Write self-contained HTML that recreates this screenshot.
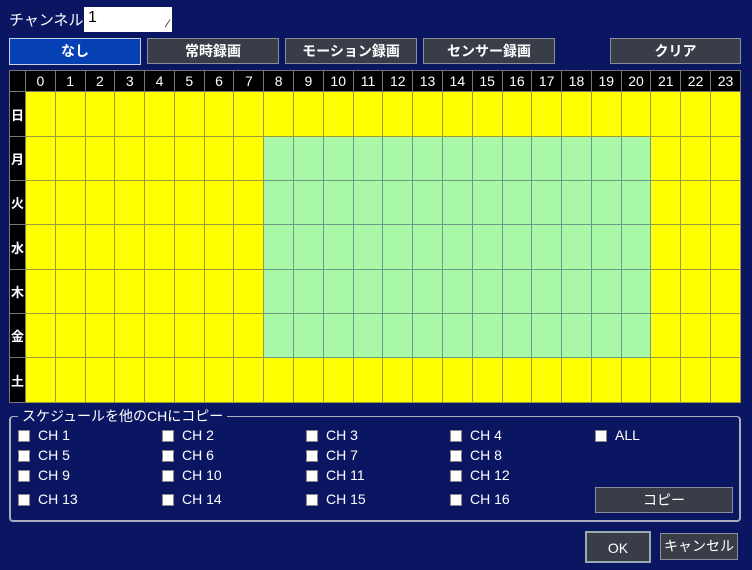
<!DOCTYPE html><html><head><meta charset="utf-8"><style>
body{margin:0;width:752px;height:570px;background:#0b1663;font-family:"Liberation Sans","Noto Sans CJK JP",sans-serif;color:#fff;position:relative;overflow:hidden}
.a{position:absolute}
.btn{position:absolute;background:#383d48;border:1px solid #8a8f99;box-sizing:border-box;color:#fff;font-size:14px;text-align:center;font-weight:bold}
table{border-collapse:collapse;position:absolute;left:9px;top:70px;width:732px;table-layout:fixed}
td{padding:0;border:1px solid #555;box-sizing:border-box}
th{background:#000;color:#fff;font-weight:normal;font-size:14px;border:1px solid #777;padding:0;height:20px;overflow:hidden}
.y{background:#ffff00;border-color:#9c9a3a}
.g{background:#a8f8a8;border-color:#6a9c86}
.rl{background:#000;font-size:13px;font-weight:bold;text-align:center;border-color:#777}
.cb{position:absolute;width:10px;height:10px;background:#fff;border:1px solid #888}
.cl{position:absolute;font-size:14px}
</style></head><body>
<div class="a" style="left:9px;top:9px;font-size:15px">チャンネル</div>
<div class="a" style="left:84px;top:7px;width:88px;height:25px;background:#fff;color:#000;font-size:16px;box-sizing:border-box;padding:2px 4px">1<span style="position:absolute;right:3px;bottom:2px;font-size:11px">⁄</span></div>
<div class="btn" style="left:9px;top:38px;width:132px;height:27px;line-height:25px;background:#0541b5;border-color:#c8d0e8">なし</div>
<div class="btn" style="left:147px;top:38px;width:132px;height:26px;line-height:24px">常時録画</div>
<div class="btn" style="left:285px;top:38px;width:132px;height:26px;line-height:24px">モーション録画</div>
<div class="btn" style="left:423px;top:38px;width:132px;height:26px;line-height:24px">センサー録画</div>
<div class="btn" style="left:610px;top:38px;width:131px;height:26px;line-height:24px">クリア</div>
<table id="t"></table>
<div class="a" style="left:9px;top:416px;width:732px;height:106px;border:2px solid #a9acbf;border-top-width:1px;border-radius:4px;box-sizing:border-box"></div>
<div class="a" style="left:18px;top:407px;background:#0b1663;padding:0 4px;font-size:14px;line-height:18px">スケジュールを他のCHにコピー</div>
<div id="cbs"></div>
<div class="btn" style="left:595px;top:487px;width:138px;height:26px;line-height:24px;font-weight:normal">コピー</div>
<div class="btn" style="left:585px;top:531px;width:66px;height:32px;line-height:30px;font-weight:normal;border:2px solid #9aa">OK</div>
<div class="btn" style="left:660px;top:533px;width:78px;height:27px;line-height:25px;font-weight:normal">キャンセル</div>
<script>
var t=document.getElementById('t'),h='<colgroup><col style="width:16px">';
for(var i=0;i<24;i++)h+='<col>';h+='</colgroup><tr><th></th>';
for(var i=0;i<24;i++)h+='<th>'+i+'</th>';h+='</tr>';
var d='日月火水木金土',hs=[45,44,44,45,44,44,45];
for(var r=0;r<7;r++){h+='<tr style="height:'+hs[r]+'px"><td class="rl">'+d[r]+'</td>';
for(var i=0;i<24;i++){var g=r>0&&r<6&&i>=8&&i<=20;h+='<td class="'+(g?'g':'y')+'"></td>'}h+='</tr>'}
t.innerHTML=h;
var c='',xs=[18,162,306,450],ys=[430,450,470,494],n=1;
for(var r=0;r<4;r++)for(var k=0;k<4;k++){c+='<div class="cb" style="left:'+xs[k]+'px;top:'+ys[r]+'px"></div><div class="cl" style="left:'+(xs[k]+20)+'px;top:'+(ys[r]-3)+'px">CH '+(n++)+'</div>'}
c+='<div class="cb" style="left:595px;top:430px"></div><div class="cl" style="left:615px;top:427px">ALL</div>';
document.getElementById('cbs').innerHTML=c;
</script>
</body></html>
